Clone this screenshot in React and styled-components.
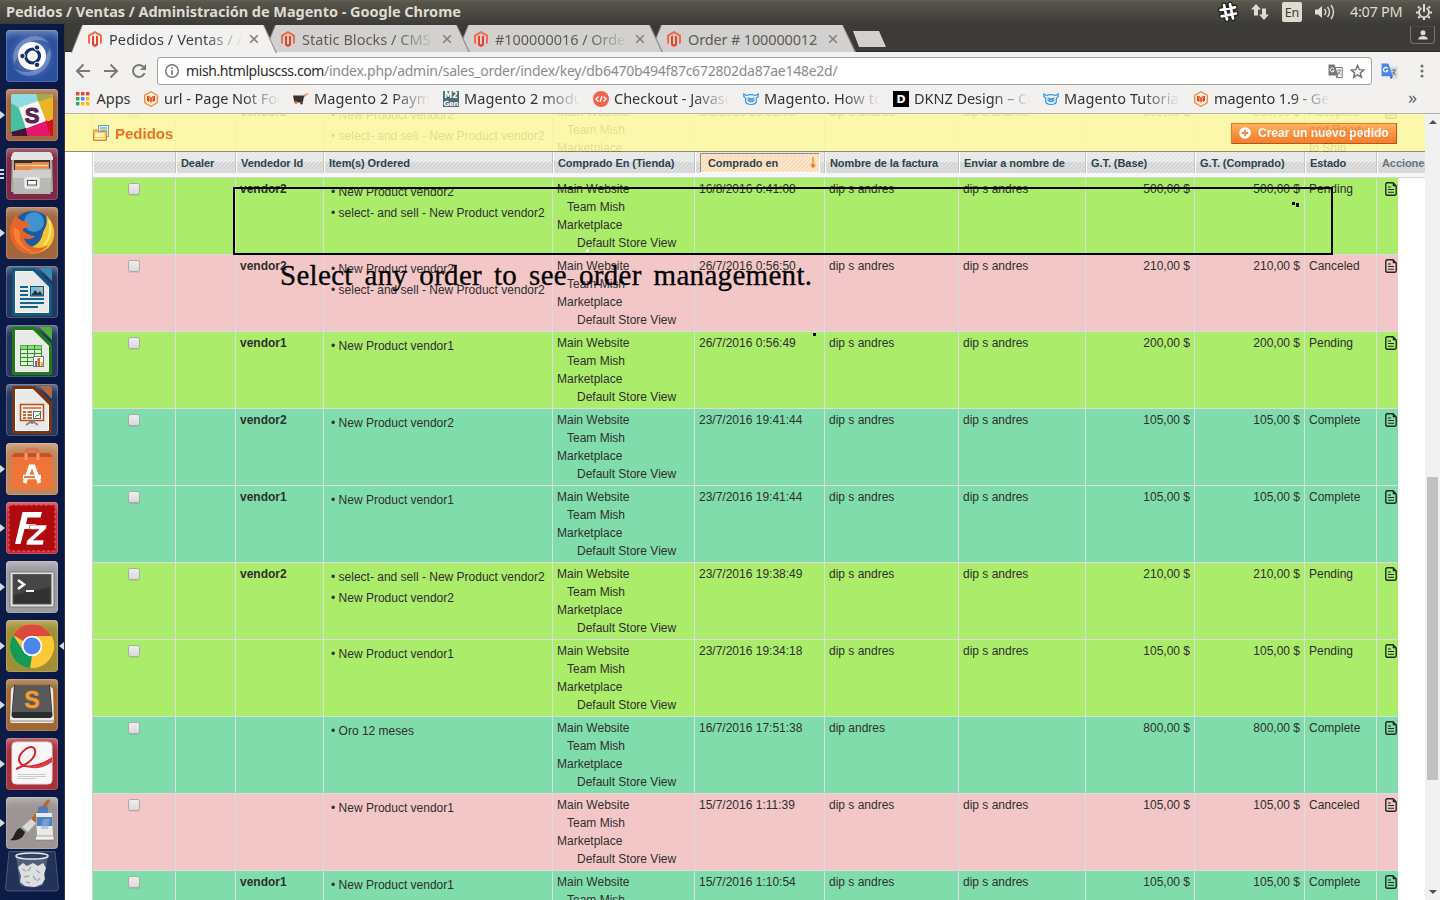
import React from "react";
import styled, { createGlobalStyle } from "styled-components";

const Global = createGlobalStyle`
  *, *::before, *::after { box-sizing: border-box; }
  html, body { margin: 0; padding: 0; background: #fff; overflow: hidden; }
  svg { display: block; flex: none; }
`;

const UI = `"Noto Sans", "Open Sans", sans-serif`;
const PAGE = `"Liberation Sans", Arial, sans-serif`;

const Desktop = styled.div`
  width: 1440px;
  height: 900px;
  display: flex;
  flex-direction: column;
  overflow: hidden;
  font-family: ${UI};
`;

const Label = styled.span`
  white-space: nowrap;
  letter-spacing: ${(p) => p.$ls || 0}px;
`;

/* ---------- system panel ---------- */
const Panel = styled.header`
  height: 24px;
  flex: none;
  display: flex;
  align-items: center;
  padding: 0 8px 0 6px;
  background: linear-gradient(#625f52 0, #56544a 3px, #3f3e39 22px, #3c3b37);
  color: #dfdbd2;
  font-size: 14.5px;
`;
const PanelTitle = styled(Label)`
  font-weight: 700;
  flex: 1;
  margin-top: -2px;
`;
const Tray = styled.div`
  display: flex;
  align-items: center;
`;
const LangBadge = styled.div`
  width: 20px;
  height: 20px;
  margin: 0 13px;
  border-radius: 2px;
  background: #dfdbd2;
  color: #3c3b37;
  font-size: 12.5px;
  line-height: 21px;
  text-align: center;
`;
const Clock = styled(Label)`
  margin: -2px 13px 0 14px;
  width: 53px;
  font-size: 14.5px;
`;

const Body = styled.div`
  flex: 1;
  min-height: 0;
  display: flex;
`;

/* ---------- launcher ---------- */
const Launcher = styled.nav`
  width: 65px;
  flex: none;
  padding: 6px 0 0 6px;
  display: flex;
  flex-direction: column;
  gap: 7px;
  background: linear-gradient(90deg, #0c1c47, #091843);
  border-right: 1px solid #35373f;
`;
const Tile = styled.div`
  position: relative;
  width: 52px;
  height: 52px;
  flex: none;
  border-radius: 4px;
  background: ${(p) => p.$bg};
  box-shadow: inset 0 0 0 1px rgba(255, 255, 255, 0.16), inset 0 8px 9px -5px rgba(255, 255, 255, 0.4);
`;
const TrashTile = styled.div`
  width: 54px;
  height: 41px;
  margin: -5px 0 0 -1px;
`;
const Pip = styled.i`
  position: absolute;
  left: -6px;
  top: ${(p) => p.$top}px;
  border: solid transparent;
  border-width: 4px 0 4px 5px;
  border-left-color: #d8d9dd;
`;
const BarPip = styled.i`
  position: absolute;
  left: -6px;
  top: ${(p) => p.$top}px;
  width: 4px;
  height: 2px;
  background: #d8d9dd;
`;
const FocusPip = styled.i`
  position: absolute;
  right: -6px;
  top: 22px;
  border: solid transparent;
  border-width: 4px 5px 4px 0;
  border-right-color: #d8d9dd;
`;

/* ---------- browser ---------- */
const Browser = styled.main`
  flex: 1;
  min-width: 0;
  display: flex;
  flex-direction: column;
  background: #f2f1f0;
`;
const TabStrip = styled.div`
  height: 29px;
  flex: none;
  display: flex;
  padding: 1px 5px 0 6px;
  background: #3c3b37;
  border-bottom: 1px solid #f2f1f0;
  box-shadow: inset 0 -1px #2b2a27;
`;
const Tab = styled.div`
  position: relative;
  width: 193px;
  height: 28px;
  flex: none;
  display: flex;
  align-items: center;
  padding-left: 17px;
  z-index: ${(p) => p.$z};
  color: ${(p) => (p.$active ? "#3b3b3b" : "#5d5c5a")};
  font-size: 14.5px;
  &::before, &::after {
    content: "";
    position: absolute;
    z-index: -1;
    top: 0;
    left: 0;
    width: 206px;
    height: ${(p) => (p.$active ? 28 : 27)}px;
    background: ${(p) => (p.$active ? "#9d9b98" : "#8f8e8b")};
    clip-path: polygon(0 100%, 11px 0, 193px 0, 206px 100%);
  }
  &::after {
    background: ${(p) => (p.$active ? "#f2f1f0" : "#d2d1cf")};
    clip-path: polygon(1px 100%, 12px 0, 192px 0, 204.5px 100%);
  }
`;
const TabTitle = styled(Label)`
  flex: none;
  width: 134px;
  margin: -1px 6px 0 7px;
  overflow: hidden;
  mask-image: ${(p) => (p.$fade ? "linear-gradient(90deg, #000 94px, transparent 134px)" : "none")};
`;
const NewTab = styled.div`
  width: 33px;
  height: 16px;
  margin: 6px 0 0 10px;
  background: #d2d1cf;
  clip-path: polygon(0 0, 26px 0, 33px 100%, 6px 100%);
`;
const UserButton = styled.div`
  width: 25px;
  height: 18px;
  margin: 1px 0 0 auto;
  border: 1px solid #77756f;
  border-top-color: #4a4944;
  border-radius: 0 0 4px 4px;
  display: flex;
  align-items: center;
  justify-content: center;
`;

const Toolbar = styled.div`
  height: 32px;
  flex: none;
  display: flex;
  align-items: center;
  padding: 4px 16px 0 10px;
`;
const NavButtons = styled.div`
  width: 82px;
  display: flex;
  gap: 12px;
`;
const Omnibox = styled.div`
  width: 1215px;
  height: 28px;
  flex: none;
  display: flex;
  align-items: center;
  padding: 0 6px;
  background: #fff;
  border: 1px solid #a5a3a0;
  border-radius: 3px;
  color: #8b8b8b;
  font-size: 14px;
`;
const Url = styled(Label)`
  flex: 1;
  margin: -2px 0 0 6px;
`;
const Host = styled(Label)`
  color: #2b2b2b;
`;
const Extensions = styled.div`
  flex: 1;
  display: flex;
  align-items: center;
  justify-content: space-between;
  padding-left: 9px;
`;

const Bookmarks = styled.div`
  height: 29px;
  flex: none;
  display: flex;
  align-items: center;
  padding: 0 0 1px 11px;
  border-bottom: 1px solid #b5b3b1;
  color: #333;
  font-size: 14.5px;
`;
const AppsLink = styled.div`
  width: 67px;
  display: flex;
  align-items: center;
  gap: 6.5px;
`;
const AppsName = styled(Label)`
  margin-top: -2px;
`;
const Bookmark = styled.div`
  width: 150px;
  display: flex;
  align-items: center;
  gap: 5px;
`;
const BookmarkName = styled(Label)`
  width: 116px;
  margin-top: -2px;
  overflow: hidden;
  mask-image: linear-gradient(90deg, #000 78px, transparent 116px);
`;
const Overflow = styled.span`
  margin: -3px 0 0 65px;
  font-size: 18px;
  color: #666;
`;

/* ---------- page ---------- */
const Viewport = styled.div`
  flex: 1;
  min-height: 0;
  display: flex;
  background: #fff;
  font: 12px/18px ${PAGE};
  color: #2f2f2f;
`;
const Content = styled.div`
  position: relative;
  width: 1360px;
  overflow: hidden;
`;
const FloatingBar = styled.div`
  position: absolute;
  z-index: 2;
  inset: 0 0 auto 0;
  height: 38px;
  display: flex;
  align-items: center;
  padding: 1px 28px 0 28px;
  background: #fcf79f;
  border-bottom: 1px solid #857f55;
  opacity: 0.87;
`;
const PageTitle = styled.h3`
  flex: 1;
  margin: 2px 0 0 6px;
  font-size: 15px;
  color: #eb5e00;
`;
const OrangeButton = styled.button`
  height: 21px;
  width: 166px;
  display: flex;
  align-items: center;
  gap: 7px;
  padding: 0 0 1px 7px;
  white-space: nowrap;
  border: 1px solid;
  border-color: #ed6502 #a04300 #a04300 #ed6502;
  background: linear-gradient(#ffa846, #fa7b1e 60%, #f56c0c);
  color: #fff;
  font: bold 12px ${PAGE};
`;

const COLS = "83px 60px 88px 229px 142px 130px 134px 127px 109px 110px 72px 49px";

const HeaderRow = styled.div`
  position: absolute;
  z-index: 1;
  top: 38px;
  left: 27px;
  right: 0;
  height: 26px;
  display: grid;
  grid-template-columns: ${COLS};
  border-left: 1px solid #cfd3d6;
  border-bottom: 1px solid #cfdccf;
  background: #f6f6f6;
  overflow: hidden;
`;
const HeaderCell = styled.div`
  height: 21px;
  padding: 2px 0 0 4px;
  white-space: nowrap;
  letter-spacing: -0.07px;
  font: bold 11px/18px ${PAGE};
  color: ${(p) => (p.$muted ? "#67767e" : "#2d444f")};
  background:
    repeating-linear-gradient(135deg, rgba(255, 255, 255, 0.45) 0 1px, transparent 1px 2.83px),
    linear-gradient(#e6e6e6 0 10px, #d5d5d5 10px);
  box-shadow: 0 5px #f6f6f6;
  border-right: ${(p) => (p.$last ? 0 : "1px solid #c3c6c8")};
  border-left: 1px solid #fff;
`;
const SortedBox = styled.div`
  display: flex;
  justify-content: space-between;
  align-items: center;
  width: 119px;
  height: 19px;
  margin-top: -1px;
  padding: 0 3px 0 7px;
  border: solid #8f8f8f;
  border-width: 1px 0 0 1px;
  box-shadow: 1px 1px #fff;
  background:
    repeating-linear-gradient(135deg, rgba(255, 255, 255, 0.5) 0 1px, transparent 1px 2.83px),
    #fbdcba;
`;

const TONES = { pending: "#abec6a", canceled: "#f3c7c8", complete: "#80ddab", plain: "#fff" };
const Table = styled.div`
  width: 1306px;
  margin: -13px 0 0 27px;
  border-left: 1px solid #cfd3d6;
  overflow: hidden;
`;
const Row = styled.div`
  height: 77px;
  display: grid;
  grid-template-columns: ${COLS};
  background: ${(p) => TONES[p.$tone]};
  border-bottom: 1px solid #d9dde3;
`;
const Cell = styled.div`
  padding: 2px 4px 0;
  border-right: 1px solid #d9dde3;
  text-align: ${(p) => p.$align || "left"};
  font-weight: ${(p) => (p.$bold ? 700 : 400)};
  white-space: ${(p) => (p.$wrap ? "normal" : "nowrap")};
`;
const CheckCell = styled(Cell)`
  display: flex;
  justify-content: center;
  padding-top: 5px;
`;
const Checkbox = styled.i`
  width: 12px;
  height: 12px;
  border: 1px solid #a9a9a9;
  border-radius: 2.5px;
  background: linear-gradient(#eeeeee, #dadada);
  box-shadow: 0 1px rgba(0, 0, 0, 0.08);
`;
const Items = styled.ul`
  list-style: none;
  margin: 3px 0 0;
  padding: 0 0 0 3px;
  li { height: 21px; }
`;
const StoreLine = styled.div`
  padding-left: ${(p) => p.$indent || 0}px;
`;
const ActionCell = styled.div`
  padding: 4px 0 0 8px;
`;

/* screen annotations */
const Frame = styled.div`
  position: absolute;
  z-index: 3;
  left: 168px;
  top: 73px;
  width: 1100px;
  height: 68px;
  border: 2px solid #000;
`;
const Note = styled.div`
  position: absolute;
  z-index: 3;
  left: 215px;
  top: 145px;
  white-space: nowrap;
  font: 29px/32px "Liberation Serif", serif;
  letter-spacing: 0.3px;
  word-spacing: 4.4px;
  -webkit-text-stroke: 0.3px #000;
  color: #000;
`;
const Speck = styled.i`
  position: absolute;
  z-index: 3;
  left: ${(p) => p.$x}px;
  top: ${(p) => p.$y}px;
  width: 3px;
  height: ${(p) => p.$h || 3}px;
  background: ${(p) => p.$c || "#000"};
`;

const Scrollbar = styled.div`
  width: 15px;
  display: flex;
  flex-direction: column;
  align-items: center;
  padding: 6px 0 6px;
  background: #f1f1f1;
`;
const ScrollArrow = styled.i`
  border: solid transparent;
  border-width: ${(p) => (p.$up ? "0 4px 4px" : "4px 4px 0")};
  border-${(p) => (p.$up ? "bottom" : "top")}-color: #505050;
`;
const Thumb = styled.div`
  width: 11px;
  height: 303px;
  margin: 353px 0 auto;
  background: #c1c1c1;
`;

/* ---------- small icons ---------- */
const MagentoIcon = () => (
  <svg width="14" height="16" viewBox="0 0 14 16">
    <path d="M7 0 L14 4 V12 L12 13.2 V5.2 L7 2.3 L2 5.2 V13.2 L0 12 V4 Z" fill="#f26a4b" />
    <path d="M4 5.6 L6 4.5 V13 L7 13.6 L8 13 V4.5 L10 5.6 V14.3 L7 16 L4 14.3 Z" fill="#e8402a" />
  </svg>
);
const CloseIcon = () => (
  <svg width="10" height="10" viewBox="0 0 10 10">
    <path d="M1.200 1.200 L8.800 8.800 M8.800 1.200 L1.200 8.800" stroke="#85837f" strokeWidth="1.600" />
  </svg>
);
const BackIcon = ({ flip }) => (
  <svg width="16" height="16" viewBox="0 0 16 16">
    <path d={flip ? "M1 8 H13.500 M7.500 1.500 L14 8 L7.500 14.500" : "M15 8 H2.500 M8.500 1.500 L2 8 L8.500 14.500"} stroke="#7b7a78" strokeWidth="2" fill="none" />
  </svg>
);
const ReloadIcon = () => (
  <svg width="16" height="16" viewBox="0 0 16 16">
    <path d="M13.6 10.2 A6 6 0 1 1 12.4 3.8" stroke="#7b7a78" strokeWidth="2" fill="none" />
    <path d="M15 1 V7 H9 Z" fill="#7b7a78" />
  </svg>
);
const InfoIcon = () => (
  <svg width="16" height="16" viewBox="0 0 16 16">
    <circle cx="8" cy="8" r="6.300" fill="none" stroke="#757575" strokeWidth="1.400" />
    <path d="M8 7.200 V11.800 M8 4.200 V5.800" stroke="#666" strokeWidth="1.500" />
  </svg>
);
const TranslateIcon = ({ color }) => (
  <svg width={color ? 17 : 15} height={color ? 17 : 15} viewBox="0 0 15 15">
    <path d="M6 3.5 H14.2 V13.6 H8.5" fill={color ? "#dcdcdc" : "#fff"} stroke={color ? "#dcdcdc" : "#777"} />
    <path d="M0.500 .5 H6.500 L10.500 11.600 H0.500 Z" fill={color ? "#4a86f0" : "#777"} />
    <path d="M7.800 11.600 H10.500 L8.800 14.400 Z" fill={color ? "#3052c4" : "#777"} />
    <path d="M5.900 4.800 A2 2 0 1 0 6.100 6.600 H4.400" stroke="#fff" strokeWidth="1" fill="none" />
    <path d="M9.300 6.200 H13.200 M11.300 5.200 V6.200 M12.500 6.400 Q11.800 9 10.200 10 M10.200 7.600 Q11 9.600 13 10.600" stroke={color ? "#6c7f97" : "#777"} strokeWidth=".9" fill="none" />
  </svg>
);
const StarIcon = () => (
  <svg width="15" height="15" viewBox="0 0 15 15">
    <path d="M7.5 1.5 L9.3 5.7 L13.8 6 L10.3 8.9 L11.4 13.3 L7.5 10.9 L3.6 13.3 L4.7 8.9 L1.2 6 L5.7 5.7 Z" fill="none" stroke="#707070" strokeWidth="1.4" />
  </svg>
);
const DotsIcon = () => (
  <svg width="4" height="14" viewBox="0 0 4 14" fill="#757472">
    <circle cx="2" cy="2" r="1.600" /><circle cx="2" cy="7" r="1.600" /><circle cx="2" cy="12" r="1.600" />
  </svg>
);
const AppsIcon = () => (
  <svg width="14" height="14" viewBox="0 0 14 14">
    {["#ea4335", "#ea4335", "#ea4335", "#34a853", "#4285f4", "#fbbc05", "#34a853", "#fbbc05", "#fbbc05"].map((c, i) => (
      <rect key={i} x={(i % 3) * 5} y={Math.floor(i / 3) * 5} width="3.400" height="3.400" fill={c} />
    ))}
  </svg>
);
const BM_ICONS = {
  heart: (
    <>
      <path d="M8 .8 L14.3 4.3 V11.7 L8 15.2 L1.7 11.7 V4.3 Z" fill="#fff3e6" stroke="#f0862c" strokeWidth="1.300" />
      <path d="M4 4.800 Q6 4 8 7 Q10 4 12 4.800 V9.500 L10 11.500 L9.300 8.500 L8 12.800 L6.700 8.500 L6 11.500 L4 9.500 Z" fill="#e0481f" />
      <path d="M5.800 6.500 L7.200 8.500 M10.200 6.500 L8.800 8.500" stroke="#fff3e6" strokeWidth=".9" />
    </>
  ),
  cart: (
    <>
      <path d="M0 4.500 H9.500 L13 3.500 L10.800 6.500 L9.800 11.500 H1.500 Z" fill="#3b3230" />
      <path d="M9.500 4.400 L15.300 2.600 L11.400 5.600" stroke="#e8a686" strokeWidth="1.200" fill="none" />
      <circle cx="3" cy="11.500" r="1.500" fill="#e8772e" /><circle cx="8.500" cy="12.300" r="1.200" fill="#4c3a36" />
    </>
  ),
  m2: (
    <>
      <rect width="16" height="16" fill="#4b6e76" />
      <text x="8" y="7.300" fontSize="8" textAnchor="middle" fill="#fff" fontFamily="DejaVu Sans" fontWeight="700">M2</text>
      <text x="8" y="14.800" fontSize="7" textAnchor="middle" fill="#fff" fontFamily="DejaVu Sans" fontWeight="700" textLength="15">Gen</text>
    </>
  ),
  code: (
    <>
      <circle cx="8" cy="8" r="8" fill="#f1624f" />
      <path d="M5.5 5.5 L3 8 L5.5 10.5 M10.5 5.5 L13 8 L10.5 10.5 M8.9 5 L7.1 11" stroke="#fff" strokeWidth="1.300" fill="none" />
    </>
  ),
  bear: (
    <>
      <path d="M3.200 4.500 L.8 2.800 V5.800 L2.600 7 V9.500 C2.600 12 5 13.500 8 13.500 S13.400 12 13.400 9.500 V7 L15.200 5.800 V2.800 L12.800 4.500 Q8 2.800 3.200 4.500 Z" fill="#eaf5fd" stroke="#3e97dd" strokeWidth="1.200" />
      <path d="M4.500 6.800 L7 7.800 H9 L11.500 6.800 M5 9 Q8 12.500 11 9 Z" fill="none" stroke="#3e97dd" strokeWidth="1.200" />
    </>
  ),
  dknz: (
    <>
      <rect width="16" height="16" fill="#000" />
      <text x="8" y="12" fontSize="11" textAnchor="middle" fill="#fff" fontFamily="DejaVu Sans" fontWeight="700">D</text>
    </>
  ),
};
const BmIcon = ({ name }) => (
  <svg width="16" height="16" viewBox="0 0 16 16">{BM_ICONS[name]}</svg>
);

const DocIcon = () => (
  <svg width="12" height="14" viewBox="0 0 12 14">
    <path d="M2.200 .8 H8 L11.200 4 V11.800 Q11.200 13.200 9.800 13.200 H2.200 Q.8 13.200 .8 11.800 V2.200 Q.8 .8 2.200 .8 Z" fill="none" stroke="#1e2a1e" strokeWidth="1.400" />
    <path d="M8 1 V4 H11 Z" fill="#1e2a1e" stroke="#1e2a1e" strokeWidth=".6" />
    <path d="M3 5 H6 M3 7.500 H9 M3 10.300 H9" stroke="#1e2a1e" strokeWidth="1.100" />
  </svg>
);
const OrdersIcon = () => (
  <svg width="16" height="16" viewBox="0 0 16 16">
    <rect x="5.500" y=".5" width="10" height="11" fill="#d9ebfa" stroke="#5c8dc0" />
    <path d="M7 3 H14 M7 5.200 H14 M10 7.400 H14" stroke="#4c9a80" />
    <path d="M.5 6.500 V5 H4 L5 6.500 H13.500 V15.500 H.5 Z" fill="#f9c240" stroke="#d07a1c" />
    <rect x="2" y="8" width="9.500" height="4" fill="#fff0b4" />
    <path d="M2 13.500 H12" stroke="#fff3c8" />
  </svg>
);
const PlusIcon = () => (
  <svg width="12" height="12" viewBox="0 0 12 12">
    <circle cx="6" cy="6" r="5.800" fill="#fff" />
    <path d="M6 2.800 V9.200 M2.800 6 H9.200" stroke="#ee7420" strokeWidth="1.800" />
  </svg>
);
const SortArrow = () => (
  <svg width="6" height="12" viewBox="0 0 6 12">
    <path d="M3 0 V9" stroke="#f77400" strokeWidth="1.200" /><path d="M.3 7.500 H5.700 L3 11.500 Z" fill="#f77400" />
  </svg>
);

/* ---------- launcher artwork ---------- */
const Art = ({ children }) => <svg width="52" height="52" viewBox="0 0 52 52">{children}</svg>;

const OfficeDoc = ({ dark, light, children }) => (
  <>
    <path d="M6 4 Q6 2 8 2 H29 L46 19 V48 Q46 50 44 50 H8 Q6 50 6 48 Z" fill={dark} />
    <path d="M33 2 H44 Q46 2 46 4 V15 Z" fill={light} />
    <path d="M9.500 5.500 H27 L42.500 21 V46.500 H9.500 Z" fill="#e9e9e8" stroke="#fff" />
    {children}
  </>
);

const LAUNCHER = [
  {
    id: "ubuntu", bg: "radial-gradient(circle, #6f8ecb, #2a4f9d 65%, #2c509c)",
    art: (
      <>
        <path d="M8 34 C2 12 30 -4 44 14 C34 6 18 10 13 24 Z" fill="#fff" opacity=".25" />
        <path d="M44 18 C50 40 22 56 8 38 C18 46 34 42 39 28 Z" fill="#fff" opacity=".25" />
        <circle cx="26" cy="26" r="14" fill="#fff" />
        <circle cx="26.500" cy="26" r="7" fill="none" stroke="#14306e" strokeWidth="3.200" />
        <g fill="#14306e" stroke="#fff" strokeWidth="1"><circle cx="16.500" cy="26" r="2.700" /><circle cx="31" cy="17.500" r="2.700" /><circle cx="31" cy="34.800" r="2.700" /></g>
      </>
    ),
  },
  {
    id: "slack", bg: "#a4653f", pips: [22],
    art: (
      <>
        <rect x="5" y="5" width="42" height="42" rx="3" fill="#f5f3f2" />
        <path d="M7 5 H30 L32 13 L10 20 L5 14 V7 Z" fill="#8edce2" /><path d="M30 5 H45 L47 7 V10 L32 13 Z" fill="#a3a94c" />
        <path d="M32 13 L47 8 V30 L38 33 Z" fill="#ecb424" /><path d="M5 14 L13 19 L20 40 L5 44 Z" fill="#46c0a0" />
        <path d="M20 39 L41 31 L44 47 H22 Z" fill="#e4176d" /><path d="M5 43 L20 39 L22 47 H6 Z" fill="#401437" /><path d="M40 33 L47 30 V47 H44 Z" fill="#d3121e" />
        <path d="M13 19 L32 12 L40 32 L21 39 Z" fill="#f8f6f5" />
        <text x="26" y="33.500" fontSize="22" fontWeight="700" textAnchor="middle" fill="#59254f" stroke="#59254f" fontFamily="Liberation Sans">S</text>
      </>
    ),
  },
  {
    id: "files", bg: "#7d2a44", bars: [21, 25, 29],
    art: (
      <>
        <path d="M6 5 H46 L47 44 H5 Z" fill="#a9a9a7" /><path d="M8 4 H44 L47 9 V12 H5 V9 Z" fill="#e4e4e2" />
        <path d="M8 12 H44 V24 H8 Z" fill="#3c302c" /><path d="M9 15 H25 L27 14 H43 V24 H9 Z" fill="#e88b4a" /><path d="M10 17.500 H42" stroke="#f7d9a0" strokeWidth="1.300" />
        <path d="M7 22 H24 L26 20.500 H44 L45 22 L44.500 46 H7.500 Z" fill="#b9b9b7" />
        <path d="M7 22 H45 V30 H7 Z" fill="#cfcfcd" />
        <rect x="19" y="30" width="14" height="10" rx="2" fill="#dedddb" stroke="#efefed" strokeWidth="1.500" /><rect x="21.500" y="32.500" width="9" height="4.500" fill="#fff" stroke="#555" />
      </>
    ),
  },
  {
    id: "firefox", bg: "#a2653c", pips: [22],
    art: (
      <>
        <circle cx="26.500" cy="25" r="21" fill="#1f5b9c" /><circle cx="28" cy="15" r="10" fill="#3e93d0" />
        <path d="M40 8 C50 17 51 33 42 41 C32 49 18 48 11 41 C24 44 36 37 37 25 C40 20 42 16 40 8 Z" fill="#f5c434" />
        <path d="M43 13 C46 22 44 32 38 38" stroke="#fbe873" strokeWidth="2" fill="none" />
        <path d="M10 8 C3 17 1 30 9 39 C18 50 35 48 42 38 C33 44 20 40 18 31 C22 33 27 32 29 29 C24 29 20 26 17 24 C17 21 20 20 24 20 C25 18 22 17 20 14 C17 15 13 13 10 8 Z" fill="#e7652a" />
        <path d="M8 20 C5 32 16 46 30 45 C20 43 12 35 14 24 Z" fill="#f28c32" opacity=".8" />
      </>
    ),
  },
  {
    id: "writer", bg: "#24375f",
    art: (
      <OfficeDoc dark="#11597f" light="#3b8bb5">
        <path d="M14 21 H22 M14 25 H22 M14 29 H22 M14 33 H38 M14 37 H38 M14 41 H32" stroke="#11658f" strokeWidth="2" />
        <rect x="24.500" y="20.500" width="13" height="9.500" fill="#7fbce0" stroke="#11597f" /><path d="M25 29.500 L29 24 L32 27 L34 25 L37 29.500 Z" fill="#223b46" /><circle cx="35" cy="23" r="1.300" fill="#e9c23a" />
      </OfficeDoc>
    ),
  },
  {
    id: "calc", bg: "#24375f",
    art: (
      <OfficeDoc dark="#1d7d12" light="#4fb236">
        <rect x="14.500" y="20.500" width="21" height="20" fill="#e2f4dd" stroke="#2f9122" />
        <rect x="14.500" y="20.500" width="21" height="4" fill="#8cd67f" />
        <path d="M14 24.500 H36 M14 28.500 H36 M14 32.500 H36 M14 36.500 H36 M21.500 20 V41 M28.500 20 V41" stroke="#2f9122" />
        <rect x="27.500" y="31.500" width="10" height="10" fill="#fff" stroke="#777" /><path d="M29 36 H31 V41 H29 Z" fill="#3f83c4" /><path d="M31.500 33 H34 V41 H31.500 Z" fill="#e06024" /><path d="M34.500 37 H37 V41 H34.500 Z" fill="#edb42c" />
      </OfficeDoc>
    ),
  },
  {
    id: "impress", bg: "#24375f",
    art: (
      <OfficeDoc dark="#7c3313" light="#b3673f">
        <path d="M20 41 L26 37 L32 41 M26 37 V40" stroke="#888" strokeWidth="2" fill="none" />
        <rect x="14.500" y="20.500" width="23" height="16" fill="#fdf1e8" stroke="#b4511f" strokeWidth="1.500" /><path d="M17 24 H35" stroke="#d0642a" strokeWidth="1.500" />
        <path d="M17 28 H20 M17 31 H20 M17 34 H20 M21.500 28 H26 M21.500 31 H26 M21.500 34 H26" stroke="#93421c" strokeWidth="1.600" /><rect x="27.500" y="27.500" width="7" height="7" fill="#fff" stroke="#666" /><path d="M29 33 L31 31 L32 32 L34 29" stroke="#2f9e3e" fill="none" />
      </OfficeDoc>
    ),
  },
  {
    id: "software", bg: "#c08558", pips: [22],
    art: (
      <>
        <path d="M20 17 V9 Q20 6 24 6 H28 Q32 6 32 9 V17" fill="none" stroke="#e0704e" strokeWidth="3" />
        <path d="M6 12 L9 10 H43 L46 12 L47 46 H5 Z" fill="#ee7437" /><path d="M6 12 L9 10 H43 L46 12 V14 H6 Z" fill="#c95328" />
        <path d="M20 17 V10 M32 17 V10" stroke="#f19a77" strokeWidth="3" />
        <path d="M18.500 40 L24.500 23.500 H27.500 L33.500 40" stroke="#fff" strokeWidth="3.800" fill="none" /><path d="M17 34 H35" stroke="#fff" strokeWidth="4.500" /><path d="M18 34 H29" stroke="#ee6a2a" strokeWidth="1.800" />
      </>
    ),
  },
  {
    id: "filezilla", bg: "#c42a36", pips: [22],
    art: (
      <>
        <rect x="3" y="3" width="46" height="46" rx="1" fill="#b00a0e" stroke="#cf5a60" strokeWidth="1.500" strokeDasharray="2.500 2.500" />
        <path d="M15 10 H36 L34.500 15.500 H21.500 L20 22 H30 L29 27 H18.500 L14.500 42 H9 L16.500 10 Z" fill="#fff" />
        <path d="M24 23 H41 L40 27 L27.500 38 H38 L37 43 H20 L21 38.500 L33 27.500 H23 Z" fill="#fff" stroke="#b00a0e" strokeWidth=".6" />
      </>
    ),
  },
  {
    id: "terminal", bg: "#9b9ba0", pips: [22],
    art: (
      <>
        <rect x="4" y="11" width="44" height="35" rx="1" fill="#e4e4e2" stroke="#777" /><rect x="7" y="13.500" width="38" height="29.500" fill="#303332" stroke="#555" />
        <path d="M7.500 14 H44.500 V26 L7.500 34 Z" fill="#fff" opacity=".1" />
        <path d="M12 19 L18 23.500 L12 28" stroke="#f3f3f3" strokeWidth="2.600" fill="none" /><path d="M20 30 H28" stroke="#f3f3f3" strokeWidth="2" />
      </>
    ),
  },
  {
    id: "chrome", bg: "#a08f35", pips: [22], focus: true,
    art: (
      <>
        <circle cx="26" cy="26" r="22" fill="#fbc638" />
        <path d="M26 26 L7 15 A22 22 0 0 1 45.500 16 H26 Z" fill="#db4a3c" /><path d="M26 26 L26 36 L24 48 A22 22 0 0 1 7 15 L17.500 31 Z" fill="#149a57" />
        <path d="M34.500 31 L25 48 A22 22 0 0 0 45.500 16 H26 Z" fill="#fcc934" />
        <circle cx="26" cy="26" r="10.300" fill="#fff" /><circle cx="26" cy="26" r="8.500" fill="#4a86ec" />
      </>
    ),
  },
  {
    id: "sublime", bg: "#a16931", pips: [22],
    art: (
      <>
        <path d="M5 10 L8 7 H44 L47 10 L48 42 Q48 44 46 44 H6 Q4 44 4 42 Z" fill="#e9e9e7" /><path d="M4 42 H48" stroke="#8d8d8b" />
        <path d="M8 6 H44 L46.500 36 Q46 39 44 39 H8 Q6 39 5.500 36 Z" fill="#2b2b2b" /><path d="M9 6 H43 L46 33 H6 Z" fill="#595959" />
        <text x="26" y="28.500" fontSize="23" fontWeight="700" textAnchor="middle" fill="#f79a32" stroke="#f79a32" strokeWidth=".5" fontFamily="Liberation Sans">S</text>
      </>
    ),
  },
  {
    id: "reader", bg: "#a9303c", pips: [22],
    art: (
      <>
        <rect x="6" y="4" width="40" height="42" rx="4" fill="#f6f6f6" stroke="#ddd" />
        <path d="M10 31 C22 26 31 20 29 12 C26 4 13 14 13 22 C15 33 34 28 45 21" stroke="#d82231" strokeWidth="2" fill="none" /><path d="M22 29 C32 29 40 25 46 19 V24 C39 29 31 32 22 29 Z" fill="#dd3a45" />
        <path d="M12 36.500 H40 M12 38.500 H40 M12 40.500 H30" stroke="#c4c4c4" strokeWidth=".9" />
      </>
    ),
  },
  {
    id: "painter", bg: "#9c9594", pips: [22],
    art: (
      <>
        <path d="M42 2 L44 4 L30 26 L25 22 Z" fill="#b5662b" /><path d="M25 22 L30 26 L22 35 L16 30 Z" fill="#d9d9d7" />
        <path d="M4 43 C9 41 8 33 14 31 L19 35 C17 42 11 44 4 43 Z" fill="#222" />
        <rect x="32" y="9.500" width="10" height="6.500" rx="1.500" fill="#4e7eb8" /><path d="M30 16 H46 L47 39 H31 Z" fill="#e7e9ea" /><path d="M30.500 20 H46 L46.500 29 H31 Z" fill="#4c82be" /><path d="M37 22 L35 32 H42 L44 22 Z" fill="#8fb2da" opacity=".6" /><path d="M30 39 H48 V43 H29 Z" fill="#f0f0ee" stroke="#777" strokeWidth=".6" />
      </>
    ),
  },
];

const TrashArt = () => (
  <svg width="54" height="41" viewBox="0 0 54 41">
    <path d="M4 .5 H50 L53.500 37 Q53.500 40 50 40 H4 Q.5 40 .5 37 Z" fill="#223259" stroke="#5f6c8d" strokeWidth=".7" />
    <path d="M11 5 L15 34 Q27 39 38 34 L43 5 Z" fill="#77829b" opacity=".55" />
    <ellipse cx="27" cy="5" rx="16" ry="3" fill="#35425f" stroke="#e4e7ec" strokeWidth="1.500" />
    <path d="M13 16 L18 12 L22 15 L28 12 L33 15 L38 12 L41 17 L39 23 L40 28 L37 33 L30 36 L20 35 L15 31 L16 25 Z" fill="#dcdedf" />
    <path d="M17 18 l4 2 M26 16 l-3 4 M31 19 l4 3 M19 26 l5 -1 M28 25 l3 4 M35 27 l-3 3 M21 31 l4 1" stroke="#a5a9af" strokeWidth="1.300" fill="none" />
  </svg>
);

/* ---------- tray icons ---------- */
const TrayIcons = {
  slack: (
    <svg width="22" height="22" viewBox="0 0 22 22">
      {[["#24231f", 5.5], ["#fff", 2.7]].map(([c, w]) => (
        <path key={c} d="M7 4 L10 18.500 M13 3.200 L16 17.500 M3.500 9 L18 6.300 M4.500 15.300 L19 12.500" stroke={c} strokeWidth={w} strokeLinecap="round" fill="none" />
      ))}
    </svg>
  ),
  network: (
    <svg width="18" height="16" viewBox="0 0 18 16" fill="#dfdbd2">
      <path d="M5 0 L10 5.500 H7 V11.500 H3 V5.500 H0 Z" /><path d="M13 16 L18 10.500 H15 V4.500 H11 V10.500 H8 Z" />
    </svg>
  ),
  volume: (
    <svg width="21" height="16" viewBox="0 0 21 16">
      <path d="M0 5.500 H3 L7 2 V14 L3 10.500 H0 Z" fill="#dfdbd2" />
      <path d="M9.500 5 Q12 8 9.500 11 M12.500 3 Q16.500 8 12.500 13 M16 1 Q21 8 16 15" stroke="#dfdbd2" strokeWidth="1.400" fill="none" />
    </svg>
  ),
  power: (
    <svg width="16" height="16" viewBox="0 0 16 16">
      <path d="M5.500 4 A5 5 0 1 0 10.500 4" stroke="#dfdbd2" strokeWidth="1.800" fill="none" />
      <path d="M8 0 V8" stroke="#dfdbd2" strokeWidth="2" />
      <path d="M3.500 4 L2 2.500 M12.500 4 L14 2.500 M2.500 8.500 H0 M13.500 8.500 H16 M3.800 12.500 L2.300 14 M12.200 12.500 L13.700 14 M8 13.500 V16" stroke="#dfdbd2" strokeWidth="2.200" />
    </svg>
  ),
};

/* ---------- data ---------- */
const TABS = [
  { title: "Pedidos / Ventas / Administración", fade: true, ls: 0.1 },
  { title: "Static Blocks / CMS / Admin", fade: true, ls: 0.05 },
  { title: "#100000016 / Orders / Ventas", fade: true, ls: -0.05 },
  { title: "Order # 100000012", ls: -0.15 },
];
const BOOKMARKS = [
  ["heart", "url - Page Not Found", -0.05],
  ["cart", "Magento 2 Payment", 0.1],
  ["m2", "Magento 2 module", 0.1],
  ["code", "Checkout - Javascript", 0],
  ["bear", "Magento. How to add", 0.1],
  ["dknz", "DKNZ Design – Custom", -0.05],
  ["bear", "Magento Tutorials", 0.1],
  ["heart", "magento 1.9 - Getting", -0.1],
];
const HEADERS = ["", "Dealer", "Vendedor Id", "Item(s) Ordered", "Comprado En (Tienda)", "Comprado en", "Nombre de la factura", "Enviar a nombre de", "G.T. (Base)", "G.T. (Comprado)", "Estado", "Acciones"];

const NP1 = "New Product vendor1";
const NP2 = "New Product vendor2";
const SELL = "select- and sell - New Product vendor2";
const ORDERS = [
  ["plain", "vendor2", [NP2, SELL], "8/8/2016 23:38:08", "dip s andres", "dip s andres", "600,00 $", "Accepted and Ready to Ship"],
  ["pending", "vendor2", [NP2, SELL], "16/8/2016 6:41:08", "dip s andres", "dip s andres", "500,00 $", "Pending"],
  ["canceled", "vendor2", [NP2, SELL], "26/7/2016 0:56:50", "dip s andres", "dip s andres", "210,00 $", "Canceled"],
  ["pending", "vendor1", [NP1], "26/7/2016 0:56:49", "dip s andres", "dip s andres", "200,00 $", "Pending"],
  ["complete", "vendor2", [NP2], "23/7/2016 19:41:44", "dip s andres", "dip s andres", "105,00 $", "Complete"],
  ["complete", "vendor1", [NP1], "23/7/2016 19:41:44", "dip s andres", "dip s andres", "105,00 $", "Complete"],
  ["pending", "vendor2", [SELL, NP2], "23/7/2016 19:38:49", "dip s andres", "dip s andres", "210,00 $", "Pending"],
  ["pending", "", [NP1], "23/7/2016 19:34:18", "dip s andres", "dip s andres", "105,00 $", "Pending"],
  ["complete", "", ["Oro 12 meses"], "16/7/2016 17:51:38", "dip andres", "", "800,00 $", "Complete"],
  ["canceled", "", [NP1], "15/7/2016 1:11:39", "dip s andres", "dip s andres", "105,00 $", "Canceled"],
  ["complete", "vendor1", [NP1], "15/7/2016 1:10:54", "dip s andres", "dip s andres", "105,00 $", "Complete"],
];

function OrderRow({ order }) {
  const [tone, vendor, items, date, billTo, shipTo, total, status] = order;
  return (
    <Row $tone={tone}>
      <CheckCell><Checkbox /></CheckCell>
      <Cell />
      <Cell $bold>{vendor}</Cell>
      <Cell><Items>{items.map((i) => <li key={i}>• {i}</li>)}</Items></Cell>
      <Cell>
        <StoreLine>Main Website</StoreLine>
        <StoreLine $indent={10}>Team Mish</StoreLine>
        <StoreLine>Marketplace</StoreLine>
        <StoreLine $indent={20}>Default Store View</StoreLine>
      </Cell>
      <Cell>{date}</Cell>
      <Cell>{billTo}</Cell>
      <Cell>{shipTo}</Cell>
      <Cell $align="right">{total}</Cell>
      <Cell $align="right">{total}</Cell>
      <Cell $wrap>{status}</Cell>
      <ActionCell><DocIcon /></ActionCell>
    </Row>
  );
}

const Gap = styled.span`
  width: ${(p) => p.$w}px;
`;

export default function App() {
  return (
    <Desktop>
      <Global />
      <Panel>
        <PanelTitle $ls={-0.04}>Pedidos / Ventas / Administración de Magento - Google Chrome</PanelTitle>
        <Tray>
          {TrayIcons.slack}
          <Gap $w={12} />
          {TrayIcons.network}
          <LangBadge>En</LangBadge>
          {TrayIcons.volume}
          <Clock $ls={-0.3}>4:07 PM</Clock>
          {TrayIcons.power}
        </Tray>
      </Panel>
      <Body>
        <Launcher>
          {LAUNCHER.map((l) => (
            <Tile key={l.id} $bg={l.bg}>
              <Art>{l.art}</Art>
              {(l.pips || []).map((t) => <Pip key={t} $top={t} />)}
              {(l.bars || []).map((t) => <BarPip key={t} $top={t} />)}
              {l.focus && <FocusPip />}
            </Tile>
          ))}
          <TrashTile><TrashArt /></TrashTile>
        </Launcher>
        <Browser>
          <TabStrip>
            {TABS.map((t, i) => (
              <Tab key={t.title} $active={i === 0} $z={10 - i}>
                <MagentoIcon />
                <TabTitle $fade={t.fade} $ls={t.ls}>{t.title}</TabTitle>
                <CloseIcon />
              </Tab>
            ))}
            <NewTab />
            <UserButton>
              <svg width="10" height="10" viewBox="0 0 10 10" fill="#dfdbd2"><circle cx="5" cy="2.800" r="2.500" /><path d="M.5 9.500 V8 Q2 6 5 6 T9.500 8 V9.500 Z" /></svg>
            </UserButton>
          </TabStrip>
          <Toolbar>
            <NavButtons><BackIcon /><BackIcon flip /><ReloadIcon /></NavButtons>
            <Omnibox>
              <InfoIcon />
              <Url $ls={-0.25}><Host $ls={-0.4}>mish.htmlpluscss.com</Host>/index.php/admin/sales_order/index/key/db6470b494f87c672802da87ae148e2d/</Url>
              <TranslateIcon />
              <Gap $w={7} />
              <StarIcon />
            </Omnibox>
            <Extensions><TranslateIcon color /><DotsIcon /></Extensions>
          </Toolbar>
          <Bookmarks>
            <AppsLink><AppsIcon /><AppsName>Apps</AppsName></AppsLink>
            {BOOKMARKS.map(([icon, name, ls]) => (
              <Bookmark key={name}><BmIcon name={icon} /><BookmarkName $ls={ls}>{name}</BookmarkName></Bookmark>
            ))}
            <Overflow>»</Overflow>
          </Bookmarks>
          <Viewport>
            <Content>
              <FloatingBar>
                <OrdersIcon />
                <PageTitle>Pedidos</PageTitle>
                <OrangeButton><PlusIcon />Crear un nuevo pedido</OrangeButton>
              </FloatingBar>
              <HeaderRow>
                {HEADERS.map((h, i) => (
                  <HeaderCell key={i} $muted={i === 11} $last={i === 11}>
                    {i === 5 ? <SortedBox>{h}<SortArrow /></SortedBox> : h}
                  </HeaderCell>
                ))}
              </HeaderRow>
              <Table>
                {ORDERS.map((o, i) => <OrderRow key={i} order={o} />)}
              </Table>
              <Frame />
              <Note>Select any order to see order management.</Note>
              <Speck $x={521} $y={135} $c="#fff" />
              <Speck $x={1227} $y={88} />
              <Speck $x={1231} $y={89} $h={4} />
              <Speck $x={748} $y={219} />
            </Content>
            <Scrollbar><ScrollArrow $up /><Thumb /><ScrollArrow /></Scrollbar>
          </Viewport>
        </Browser>
      </Body>
    </Desktop>
  );
}
